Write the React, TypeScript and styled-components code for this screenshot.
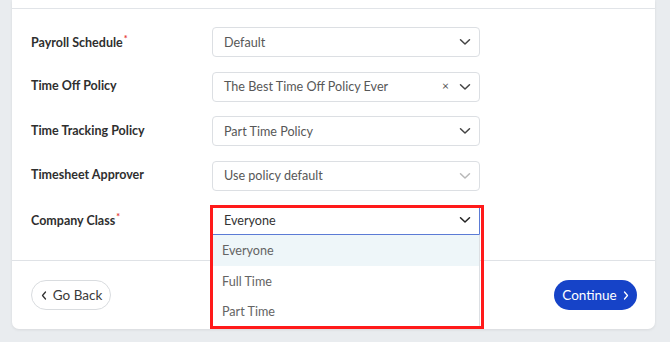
import React from "react";
import styled, { createGlobalStyle } from "styled-components";

const Global = createGlobalStyle`
  html, body { margin: 0; padding: 0; background: #e9ecef; }
  body { font-family: Lato, "Open Sans", Arial, sans-serif; width: 670px; height: 342px; overflow: hidden; }
  * { box-sizing: border-box; }
`;

const Page = styled.div`
  padding: 0 15px 14px 12px;
  height: 342px;
`;

const Card = styled.div`
  background: #fff;
  border-radius: 0 0 7px 7px;
  box-shadow: 0 1px 3px rgba(0, 0, 0, 0.08);
  display: flex;
  flex-direction: column;
`;

const CardHeader = styled.div`
  height: 9px;
  border-bottom: 1px solid #e1e4e8;
`;

const Form = styled.div`
  display: flex;
  flex-direction: column;
  gap: 14.5px;
  padding: 18px 19px 25px 19px;
  border-bottom: 1px solid #dfe2e6;
`;

const Row = styled.div`
  display: grid;
  grid-template-columns: 181px 268px;
  align-items: center;
  position: relative;
`;

const Label = styled.div`
  font-size: 12.5px;
  font-weight: 700;
  color: #2f2f2f;
  margin-top: -2px;
`;

const Req = styled.span`
  color: #e53935;
  font-size: 9px;
  vertical-align: 5px;
  margin-left: 1px;
`;

const SelectBox = styled.div<{ $open?: boolean }>`
  height: 30px;
  border: 1px solid ${(p) => (p.$open ? "#5b7bd5" : "#dcdfe3")};
  border-radius: ${(p) => (p.$open ? "3px 3px 0 0" : "4px")};
  display: flex;
  align-items: center;
  padding: 0 8px 0 11px;
  gap: 8px;
  background: #fff;
`;

const Value = styled.div<{ $dark?: boolean }>`
  flex: 1;
  font-size: 12.6px;
  color: ${(p) => (p.$dark ? "#333" : "#575757")};
  white-space: nowrap;
`;

const Clear = styled.span`
  font-size: 12px;
  color: #555;
  line-height: 1;
  margin-top: -1px;
  margin-right: 2px;
`;

const Chevron = ({ color = "#444" }: { color?: string }) => (
  <svg width="12" height="8" viewBox="0 0 12 8">
    <path d="M1.5 1.8 L6 6 L10.5 1.8" fill="none" stroke={color} strokeWidth="1.5" strokeLinecap="round" strokeLinejoin="round" />
  </svg>
);

const Menu = styled.div`
  position: absolute;
  left: 181px;
  top: 30px;
  width: 268px;
  background: #fff;
  border: 1px solid #dcdfe3;
  border-top: none;
  z-index: 2;
`;

const Option = styled.div<{ $active?: boolean }>`
  height: 30.7px;
  display: flex;
  align-items: center;
  padding-left: 9px;
  font-size: 12.6px;
  color: #646464;
  background: ${(p) => (p.$active ? "#eef6f9" : "#fff")};
`;

const Highlight = styled.div`
  position: absolute;
  left: 179px;
  top: 0px;
  width: 274px;
  height: 124px;
  border: 3px solid #ff1a1a;
  z-index: 3;
  pointer-events: none;
`;

const Footer = styled.div`
  height: 68px;
  display: flex;
  align-items: center;
  justify-content: space-between;
  padding: 0 18px 0 19px;
`;

const BackButton = styled.button`
  height: 30px;
  width: 80px;
  border-radius: 15px;
  border: 1px solid #d9dcdf;
  background: #fff;
  color: #3a3a3a;
  font-family: inherit;
  font-size: 13.5px;
  display: flex;
  align-items: center;
  justify-content: center;
  gap: 6px;
  padding: 0 0 0 1px;
`;

const ContinueButton = styled.button`
  height: 30px;
  width: 83px;
  border-radius: 15px;
  border: none;
  background: #1643c8;
  color: #fff;
  font-family: inherit;
  font-size: 13.5px;
  display: flex;
  align-items: center;
  justify-content: center;
  gap: 6px;
  padding: 0;
`;

const Small = ({ dir, color }: { dir: "l" | "r"; color: string }) => (
  <svg width="6" height="9" viewBox="0 0 6 9">
    <path
      d={dir === "l" ? "M4.5 1 L1.5 4.5 L4.5 8" : "M1.5 1 L4.5 4.5 L1.5 8"}
      fill="none"
      stroke={color}
      strokeWidth="1.3"
      strokeLinecap="round"
      strokeLinejoin="round"
    />
  </svg>
);

export default function App() {
  return (
    <>
      <Global />
      <Page>
        <Card>
          <CardHeader />
          <Form>
            <Row>
              <Label>
                Payroll Schedule<Req>*</Req>
              </Label>
              <SelectBox>
                <Value>Default</Value>
                <Chevron />
              </SelectBox>
            </Row>
            <Row>
              <Label>Time Off Policy</Label>
              <SelectBox>
                <Value>The Best Time Off Policy Ever</Value>
                <Clear>×</Clear>
                <Chevron />
              </SelectBox>
            </Row>
            <Row>
              <Label>Time Tracking Policy</Label>
              <SelectBox>
                <Value>Part Time Policy</Value>
                <Chevron />
              </SelectBox>
            </Row>
            <Row>
              <Label>Timesheet Approver</Label>
              <SelectBox>
                <Value>Use policy default</Value>
                <Chevron color="#b8b8b8" />
              </SelectBox>
            </Row>
            <Row>
              <Label>
                Company Class<Req>*</Req>
              </Label>
              <SelectBox $open>
                <Value $dark>Everyone</Value>
                <Chevron color="#222" />
              </SelectBox>
              <Menu>
                <Option $active>Everyone</Option>
                <Option>Full Time</Option>
                <Option>Part Time</Option>
              </Menu>
              <Highlight />
            </Row>
          </Form>
          <Footer>
            <BackButton>
              <Small dir="l" color="#333" />
              Go Back
            </BackButton>
            <ContinueButton>
              Continue
              <Small dir="r" color="#fff" />
            </ContinueButton>
          </Footer>
        </Card>
      </Page>
    </>
  );
}
